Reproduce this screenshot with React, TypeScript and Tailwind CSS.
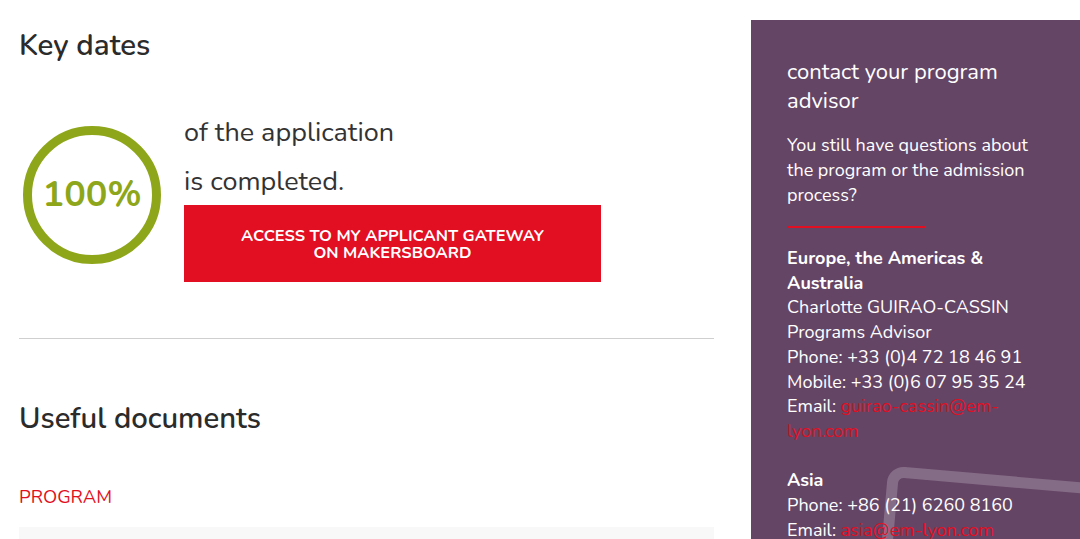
import React from 'react';

const font = { fontFamily: '"Nunito", "Lato", "Open Sans", sans-serif' };

function ProgressRing({ value }: { value: number }) {
 return (<div className="relative w-[138px] h-[138px] shrink-0">
 <svg viewBox="0 0 138 138" className="absolute inset-0 w-full h-full">
 <circle cx="69" cy="69" r="64.5" fill="none" stroke="#8ea61a" strokeWidth="9"/>
 </svg>
 <div className="absolute inset-0 flex items-center justify-center text-[36px] font-bold text-[#8ea61a]">
 {value}%
 </div>
 </div>);
}

function AdvisorPanel() {
 return (<div className="relative ml-[37px] mt-5 flex-1 bg-[#654566] overflow-hidden text-white">
 <svg className="absolute inset-0 w-full h-full pointer-events-none" aria-hidden="true">
 <rect x="142.5" y="451.5" width="420" height="300" rx="11" fill="none" stroke="rgba(255,255,255,0.21)" strokeWidth="11" transform="rotate(5 142.5 451.5)"/>
 </svg>
 <div className="relative pl-9 pt-[38px] pr-4">
 <h3 className="text-[22px] leading-[29px]">
 contact your program<br />advisor
 </h3>
 <p className="mt-[17px] text-[18px] leading-[25px]">
 You still have questions about<br />the program or the admission<br />process?
 </p>
 <div className="mt-[18px] w-[138px] h-[2px] bg-[#e20e22]"/>
 <div className="mt-[18px] text-[18px] leading-[24.7px] whitespace-nowrap">
 <p className="font-bold">Europe, the Americas &amp;<br />Australia</p>
 <p>Charlotte GUIRAO-CASSIN</p>
 <p>Programs Advisor</p>
 <p>Phone: +33 (0)4 72 18 46 91</p>
 <p>Mobile: +33 (0)6 07 95 35 24</p>
 <p>Email: <a className="text-[#e20e22]">guirao-cassin@em-<br />lyon.com</a></p>
 <p className="mt-[24.7px] font-bold">Asia</p>
 <p>Phone: +86 (21) 6260 8160</p>
 <p>Email: <a className="text-[#e20e22]">asia@em-lyon.com</a></p>
 </div>
 </div>
 </div>);
}

export default function App() {
 return (<div className="flex pl-[19px] h-[539px] overflow-hidden bg-white text-[#333]" style={font}>
 <div className="w-[695px] shrink-0">
 <h2 className="pt-[27px] text-[29.5px] leading-[36px] font-semibold text-[#2b2b2b]">Key dates</h2>

 <div className="mt-[45px] flex items-start">
 <div className="ml-1 mt-[18px]">
 <ProgressRing value={100}/>
 </div>
 <div className="ml-[23px]">
 <p className="text-[27px] leading-[49px]">of the application</p>
 <p className="text-[27px] leading-[49px]">is completed.</p>
 <a className="-mt-[1px] flex w-[417px] h-[77px] items-center justify-center bg-[#e20e22] text-center text-white text-[16.4px] leading-[17px] font-bold uppercase">
 Access to my applicant gateway<br />on makersboard
 </a>
 </div>
 </div>

 <div className="mt-[56px] border-t border-[#cfcfcf]"/>

 <h2 className="mt-[61px] text-[29.3px] leading-[36px] font-semibold text-[#2b2b2b]">Useful documents</h2>

 <p className="mt-[49px] text-[18.5px] leading-[24px] text-[#e20e22] uppercase">Program</p>

 <div className="mt-[18px] h-[120px] bg-[#f8f8f8]"/>
 </div>

 <AdvisorPanel/>
 </div>);
}
